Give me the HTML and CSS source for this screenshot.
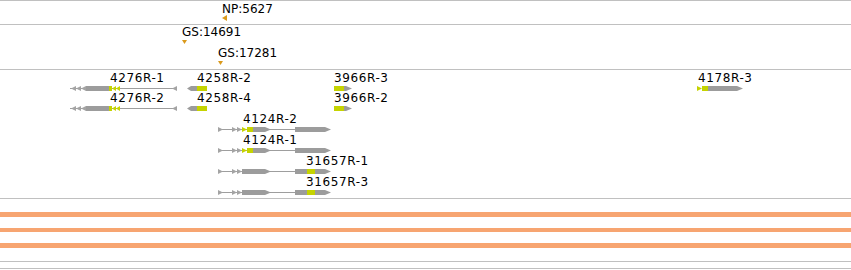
FILE: index.html
```html
<!doctype html>
<html lang="en">
<head>
  <title>Track view</title>
  <link rel="stylesheet" href="styles.css">
</head>
<body>
  <div id="tracks">
    <div class="track track-np">
      <svg width="851" height="23" viewBox="0 1 851 23">
        <text class="label" x="222" y="13">NP:5627</text>
        <polygon class="marker" points="227,15 227,21 222,18"></polygon>
      </svg>
    </div>
    <div class="track track-gs">
      <svg width="851" height="44" viewBox="0 25 851 44">
        <text class="label" x="182" y="36">GS:14691</text>
        <polygon class="marker" points="182,40 187,40 184.5,44"></polygon>
        <text class="label" x="218" y="57">GS:17281</text>
        <polygon class="marker" points="218,61 223,61 220.5,65"></polygon>
      </svg>
    </div>
    <div class="track track-genes">
      <svg width="851" height="128" viewBox="0 70 851 128">
        <defs>
          <g id="gene-4276">
            <line class="intron" x1="70" y1="2.5" x2="177" y2="2.5"></line>
            <polygon class="strand" points="71,2.5 76,0 76,5"></polygon>
            <polygon class="strand" points="76,2.5 81,0 81,5"></polygon>
            <polygon class="strand" points="81,2.5 86,0 86,5"></polygon>
            <rect class="exon" x="86" y="0" width="23" height="5"></rect>
            <rect class="cds" x="109" y="0" width="3" height="5"></rect>
            <polygon class="cds" points="112,2.5 116,0 116,5"></polygon>
            <polygon class="cds" points="116,2.5 120,0 120,5"></polygon>
            <polygon class="strand" points="172,2.5 177,0 177,5"></polygon>
          </g>
          <g id="gene-4258">
            <polygon class="exon" points="187,2.5 191,0 197,0 197,5 191,5"></polygon>
            <rect class="cds" x="197" y="0" width="10" height="5"></rect>
          </g>
          <g id="gene-3966">
            <rect class="cds" x="334" y="0" width="10" height="5"></rect>
            <polygon class="exon" points="344,0 346,0 352,2.5 346,5 344,5"></polygon>
          </g>
          <g id="gene-4124">
            <line class="intron" x1="218" y1="2.5" x2="330" y2="2.5"></line>
            <polygon class="strand" points="218,0 223,2.5 218,5"></polygon>
            <polygon class="strand" points="232,0 237,2.5 232,5"></polygon>
            <polygon class="strand" points="237,0 242,2.5 237,5"></polygon>
            <polygon class="cds" points="242,0 247,2.5 242,5"></polygon>
            <rect class="cds" x="247" y="0" width="6" height="5"></rect>
            <polygon class="exon" points="253,0 265,0 271,2.5 265,5 253,5"></polygon>
            <polygon class="exon" points="295,0 325,0 331,2.5 325,5 295,5"></polygon>
          </g>
          <g id="gene-31657">
            <line class="intron" x1="218" y1="2.5" x2="330" y2="2.5"></line>
            <polygon class="strand" points="218,0 223,2.5 218,5"></polygon>
            <polygon class="strand" points="232,0 237,2.5 232,5"></polygon>
            <polygon class="strand" points="237,0 242,2.5 237,5"></polygon>
            <polygon class="exon" points="242,0 265,0 271,2.5 265,5 242,5"></polygon>
            <rect class="exon" x="295" y="0" width="12" height="5"></rect>
            <rect class="cds" x="307" y="0" width="8" height="5"></rect>
            <polygon class="exon" points="315,0 325,0 331,2.5 325,5 315,5"></polygon>
          </g>
        </defs>

        <g transform="translate(0,86)">
          <text class="label gene-label" x="110" y="-4.5">4276R-1</text>
          <use href="#gene-4276"></use>
          <text class="label gene-label" x="197" y="-4.5">4258R-2</text>
          <use href="#gene-4258"></use>
          <text class="label gene-label" x="334" y="-4.5">3966R-3</text>
          <use href="#gene-3966"></use>
          <text class="label gene-label" x="698" y="-4.5">4178R-3</text>
          <polygon class="cds" points="697,0 702,2.5 697,5"></polygon>
          <rect class="cds" x="702" y="0" width="6" height="5"></rect>
          <polygon class="exon" points="708,0 737,0 743,2.5 737,5 708,5"></polygon>
        </g>
        <g transform="translate(0,106)">
          <text class="label gene-label" x="110" y="-4.5">4276R-2</text>
          <use href="#gene-4276"></use>
          <text class="label gene-label" x="197" y="-4.5">4258R-4</text>
          <use href="#gene-4258"></use>
          <text class="label gene-label" x="334" y="-4.5">3966R-2</text>
          <use href="#gene-3966"></use>
        </g>
        <g transform="translate(0,127)">
          <text class="label gene-label" x="243" y="-4">4124R-2</text>
          <use href="#gene-4124"></use>
        </g>
        <g transform="translate(0,148)">
          <text class="label gene-label" x="243" y="-4">4124R-1</text>
          <use href="#gene-4124"></use>
        </g>
        <g transform="translate(0,169)">
          <text class="label gene-label" x="306" y="-4">31657R-1</text>
          <use href="#gene-31657"></use>
        </g>
        <g transform="translate(0,190)">
          <text class="label gene-label" x="306" y="-4">31657R-3</text>
          <use href="#gene-31657"></use>
        </g>
      </svg>
    </div>
    <div class="track track-coverage">
      <div class="bar"></div>
      <div class="bar"></div>
      <div class="bar"></div>
    </div>
    <div class="track track-empty"></div>
    <div class="track track-last"></div>
  </div>
</body>
</html>
```

FILE: styles.css
```css
html, body {
  margin: 0;
  padding: 0;
  background: #fff;
  overflow: hidden;
}
body {
  font-family: "DejaVu Sans", sans-serif;
  font-size: 12px;
}
#tracks {
  width: 851px;
}
.track {
  border-top: 1px solid #c0c0c0;
}
.track svg {
  display: block;
}
.track-np {
  height: 23px;
}
.track-gs {
  height: 44px;
}
.track-genes {
  height: 128px;
}
.track-coverage {
  height: 63px;
  box-sizing: border-box;
  padding: 13px 0;
  display: flex;
  flex-flow: column nowrap;
  gap: 11px;
}
.track-coverage .bar {
  height: 5px;
  background-color: #f7a571;
}
.track-empty {
  height: 6px;
}
.track-last {
  height: 0;
}
.label {
  font-family: "DejaVu Sans", sans-serif;
  font-size: 12px;
  fill: #000;
}
.gene-label {
  letter-spacing: 0.6px;
}
.marker {
  fill: #da9a1c;
}
.intron {
  stroke: #9e9e9e;
  stroke-width: 1;
}
.strand {
  fill: #a4a4a4;
}
.exon {
  fill: #9c9c9c;
}
.cds {
  fill: #c5d300;
}
```
